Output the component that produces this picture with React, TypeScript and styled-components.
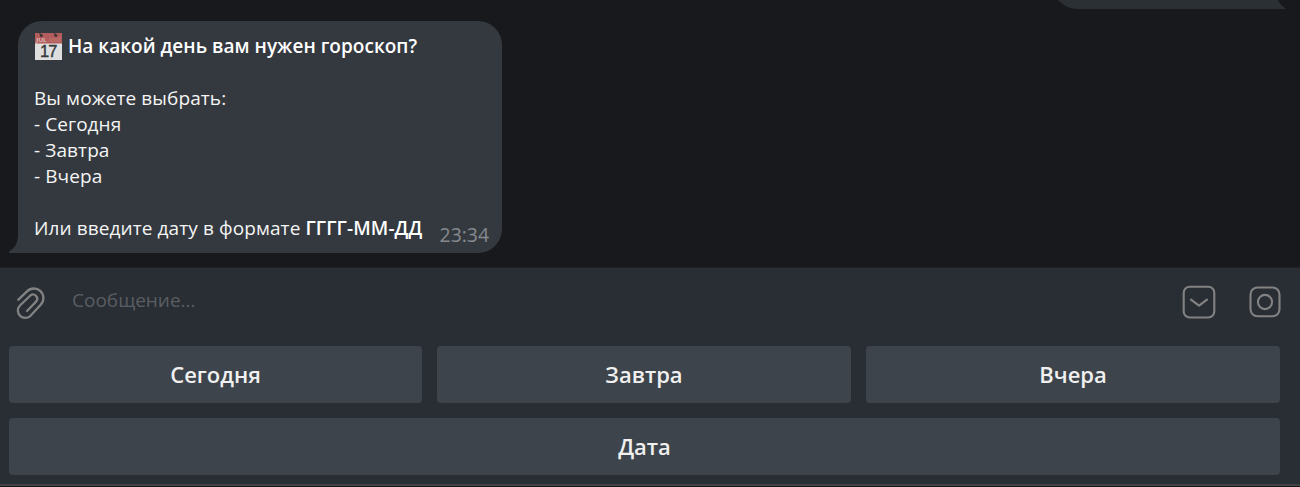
import React from "react";
import styled, { createGlobalStyle } from "styled-components";

const GlobalStyle = createGlobalStyle`
  * { box-sizing: border-box; }
  body {
    margin: 0;
    background: #18191c;
    font-family: "Open Sans", "Noto Sans", sans-serif;
    overflow: hidden;
  }
`;

const Screen = styled.div`
  width: 1300px;
  height: 487px;
  display: flex;
  flex-direction: column;
  background: #18191c;
`;

const Chat = styled.main`
  height: 268px;
  display: flex;
  flex-direction: column;
  border-bottom: 1px solid #1f2125;
`;

const OutgoingTail = styled.svg`
  display: block;
  align-self: flex-end;
  margin-right: 14px;
`;

const Bubble = styled.article`
  position: relative;
  width: 484px;
  height: 232px;
  margin: 12px 0 0 18px;
  padding: 12px 13px 0 16px;
  border-radius: 24px 24px 24px 0;
  background: #34393f;
  color: #f5f5f5;
`;

const BubbleTail = styled.svg`
  position: absolute;
  left: -9px;
  bottom: 0;
`;

const Line = styled.p<{ $spacing?: number }>`
  margin: 0;
  height: 26px;
  display: flex;
  align-items: center;
  font-size: 19px;
  line-height: 26px;
  white-space: pre;
  letter-spacing: ${(p) => p.$spacing ?? 0.1}px;
`;

const Strong = styled.strong`
  font-weight: 600;
  color: #fff;
`;

const CalendarIcon = styled.svg`
  margin: 0 6px 0 1px;
  flex: none;
`;

const LastLine = styled.div`
  display: flex;
  justify-content: space-between;
`;

const Time = styled.time`
  margin-top: 7px;
  font-size: 19.4px;
  line-height: 26px;
  color: #868a8e;
`;

const Panel = styled.footer`
  height: 219px;
  display: flex;
  flex-direction: column;
  background: #292d34;
  border-bottom: 1px solid #18181a;
`;

const Composer = styled.div`
  height: 78px;
  padding: 0 18px 10px 15px;
  display: flex;
  align-items: center;
`;

const Placeholder = styled.span`
  flex: 1;
  margin: -5px 0 0 26px;
  font-size: 19px;
  line-height: 26px;
  color: #5a5e62;
`;

const IconButton = styled.button`
  display: flex;
  padding: 0;
  border: 0;
  background: none;
  color: #828282;
`;

const AttachButton = styled(IconButton)`
  margin-top: 2px;
`;

const Actions = styled.div`
  display: flex;
  gap: 32px;
`;

const Keyboard = styled.div`
  flex: 1;
  padding: 0 20px 0 9px;
  display: grid;
  grid-template-columns: 413px 1fr 1fr;
  grid-template-rows: 57px 57px;
  gap: 15px;
  border-bottom: 2px solid #434343;
`;

const Key = styled.button<{ $wide?: boolean }>`
  grid-column: ${(p) => (p.$wide ? "1 / -1" : "auto")};
  padding: 0 0 1px;
  border: 0;
  border-radius: 4px;
  background: #3e444b;
  color: #f0f0f0;
  font: 600 22px/30px "Open Sans", "Noto Sans", sans-serif;
`;

function Calendar() {
  return (
    <CalendarIcon width="27" height="27" viewBox="0 0 27 27">
      <rect width="27" height="27" fill="#dedede" />
      <rect width="27" height="10.5" fill="#b25d5b" />
      <path d="M4.5 0 6.3 2.3M19 0l1.9 2.3" stroke="#3d3436" strokeWidth="1.1" />
      <circle cx="6.3" cy="2.6" r="1.5" fill="#3d3436" />
      <circle cx="20.8" cy="2.6" r="1.5" fill="#3d3436" />
      <text x="1.2" y="9.3" fontSize="6" fontWeight="600" letterSpacing="0" textLength="10.5" lengthAdjust="spacingAndGlyphs" fill="#e2c9c8">JUL</text>
      <path d="M15 5v4M17 5v4M19 4.5v4.5M21 5v4M23 4.5v4.5M25 4v5" stroke="#c77f7c" strokeWidth=".7" />
      <text x="5" y="24" fontSize="16.5" fontFamily="Liberation Sans, sans-serif" letterSpacing="-1" fill="#38393b" stroke="#38393b" strokeWidth=".4">17</text>
    </CalendarIcon>
  );
}

function Paperclip() {
  return (
    <svg width="31" height="34" viewBox="15 286 31 34" fill="none" stroke="currentColor" strokeWidth="2.3" strokeLinecap="round">
      <path d="M18.2 299.8 27 291.4A9.5 9.5 0 0 1 40.7 304.7L30.3 316A7.4 7.4 0 0 1 19.7 305.7L30.4 295.5A4.2 4.2 0 0 1 36.3 301.4L27 311" />
    </svg>
  );
}

export default function App() {
  return (
    <Screen>
      <GlobalStyle />
      <Chat>
        <OutgoingTail width="229" height="9" viewBox="0 0 229 9">
          <path d="M1 0Q9 9 21 9H229Q224 6 221 0Z" fill="#2b3034" />
        </OutgoingTail>
        <Bubble>
          <BubbleTail width="10" height="24" viewBox="0 0 10 24">
            <path d="M9 0V8Q8 18 0 22.5V24H10V0Z" fill="#34393f" />
          </BubbleTail>
          <Line $spacing={0.03}>
            <Calendar />
            <Strong>На какой день вам нужен гороскоп?</Strong>
          </Line>
          <Line />
          <Line>Вы можете выбрать:</Line>
          <Line $spacing={0.05}>- Сегодня</Line>
          <Line>- Завтра</Line>
          <Line>- Вчера</Line>
          <Line />
          <LastLine>
            <Line>
              Или введите дату в формате <Strong>ГГГГ-ММ-ДД</Strong>
            </Line>
            <Time>23:34</Time>
          </LastLine>
        </Bubble>
      </Chat>
      <Panel>
        <Composer>
          <AttachButton aria-label="Прикрепить"><Paperclip /></AttachButton>
          <Placeholder>Сообщение...</Placeholder>
          <Actions>
            <IconButton aria-label="Клавиатура">
              <svg width="34" height="34" viewBox="0 0 34 34" fill="none" stroke="currentColor" strokeWidth="2.1" strokeLinecap="round" strokeLinejoin="round">
                <rect x="1.7" y="1.7" width="30.6" height="30.8" rx="6" />
                <path d="m9 14.6 8 6 8-6" strokeWidth="2.3" />
              </svg>
            </IconButton>
            <IconButton aria-label="Камера">
              <svg width="34" height="34" viewBox="0 0 34 34" fill="none" stroke="currentColor" strokeWidth="2.1">
                <rect x="2.5" y="2.5" width="29" height="28.8" rx="7" />
                <circle cx="17" cy="17" r="7.1" />
              </svg>
            </IconButton>
          </Actions>
        </Composer>
        <Keyboard>
          <Key>Сегодня</Key>
          <Key>Завтра</Key>
          <Key>Вчера</Key>
          <Key $wide>Дата</Key>
        </Keyboard>
      </Panel>
    </Screen>
  );
}
